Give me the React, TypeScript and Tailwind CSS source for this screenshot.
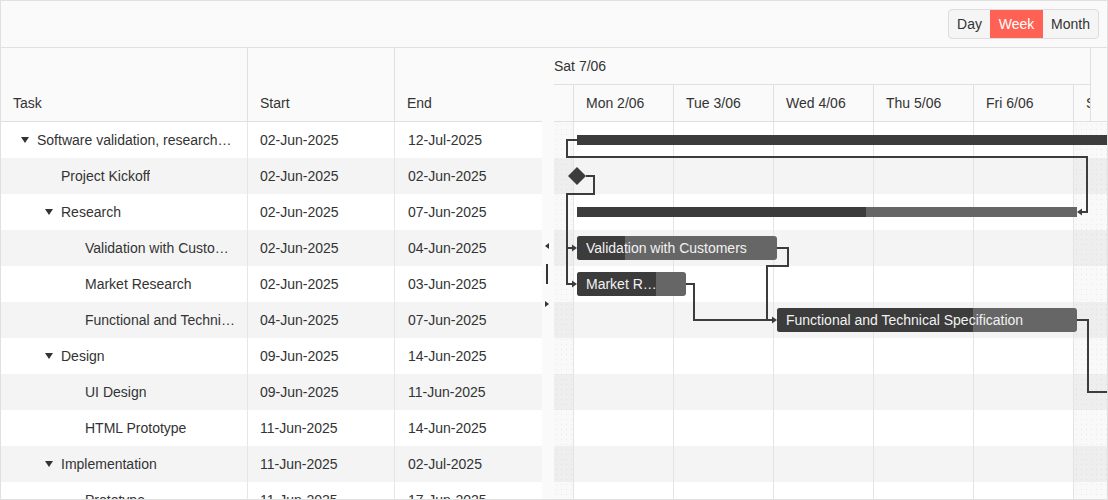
import React from "react";

type Row = { name: string; level: number; exp?: boolean; start: string; end: string };

const rows: Row[] = [
  { name: "Software validation, research and implementation", level: 0, exp: true, start: "02-Jun-2025", end: "12-Jul-2025" },
  { name: "Project Kickoff", level: 1, start: "02-Jun-2025", end: "02-Jun-2025" },
  { name: "Research", level: 1, exp: true, start: "02-Jun-2025", end: "07-Jun-2025" },
  { name: "Validation with Customers", level: 2, start: "02-Jun-2025", end: "04-Jun-2025" },
  { name: "Market Research", level: 2, start: "02-Jun-2025", end: "03-Jun-2025" },
  { name: "Functional and Technical Specification", level: 2, start: "04-Jun-2025", end: "07-Jun-2025" },
  { name: "Design", level: 1, exp: true, start: "09-Jun-2025", end: "14-Jun-2025" },
  { name: "UI Design", level: 2, start: "09-Jun-2025", end: "11-Jun-2025" },
  { name: "HTML Prototype", level: 2, start: "11-Jun-2025", end: "14-Jun-2025" },
  { name: "Implementation", level: 1, exp: true, start: "11-Jun-2025", end: "02-Jul-2025" },
  { name: "Prototype", level: 2, start: "11-Jun-2025", end: "17-Jun-2025" },
];

const indent = ["pl-[20px]", "pl-[44px]", "pl-[68px]"];
const indentNoExp = ["pl-[36px]", "pl-[60px]", "pl-[84px]"];

function Caret() {
  return (
    <svg width="8" height="6" viewBox="0 0 8 6" className="shrink-0 mr-[8px]">
      <polygon points="0,0 8,0 4,6" fill="#333" />
    </svg>
  );
}

const days = ["Mon 2/06", "Tue 3/06", "Wed 4/06", "Thu 5/06", "Fri 6/06", "Sat 7/06"];

const weekendBg =
  "bg-[rgba(0,0,0,0.025)] bg-[radial-gradient(rgba(0,0,0,0.06)_0.6px,transparent_0.8px)] bg-[length:5px_5px]";

function Bar({
  left,
  top,
  width,
  progress,
  label,
}: {
  left: number;
  top: number;
  width: number;
  progress: number;
  label: string;
}) {
  return (
    <div
      className="absolute h-[24px] rounded-[3px] bg-[#666666] overflow-hidden"
      style={{ left, top, width }}
    >
      <div className="absolute left-0 top-0 bottom-0 bg-[#3c3c3c]" style={{ width: progress }} />
      <div className="relative h-full flex items-center pl-[9px] pr-[25px] text-[14px] text-[#f2f2f2] whitespace-nowrap overflow-hidden">
        <span className="truncate">{label}</span>
      </div>
    </div>
  );
}

export default function App() {
  return (
    <div className="w-[1108px] h-[500px] border border-[#e0e0e0] flex flex-col overflow-hidden bg-white font-['Liberation_Sans',Arial,sans-serif] text-[14px] text-[#333]">
      {/* toolbar */}
      <div className="h-[47px] shrink-0 border-b border-[#e0e0e0] bg-[#fafafa] flex justify-end items-start pt-[8px] pr-[8px]">
        <div className="flex h-[30px] rounded-[4px] border border-[#dddddd] bg-[#f5f5f5] overflow-hidden">
          <div className="w-[41px] flex items-center justify-center text-[#333]">Day</div>
          <div className="w-[53px] flex items-center justify-center bg-[#ff6155] text-white">Week</div>
          <div className="w-[55px] flex items-center justify-center text-[#333]">Month</div>
        </div>
      </div>

      {/* body */}
      <div className="flex flex-1 min-h-0">
        {/* table */}
        <div className="w-[541px] shrink-0 flex flex-col">
          <div className="h-[74px] shrink-0 flex border-b border-[#e0e0e0] bg-[#fafafa]">
            <div className="w-[247px] border-r border-[#e0e0e0] flex items-end pb-[7px] pl-[12px]">Task</div>
            <div className="w-[147px] border-r border-[#e0e0e0] flex items-end pb-[7px] pl-[12px]">Start</div>
            <div className="flex-1 flex items-end pb-[7px] pl-[12px]">End</div>
          </div>
          <div className="flex-1 overflow-hidden">
            {rows.map((r, i) => (
              <div key={i} className={`flex h-[36px] ${i % 2 === 1 ? "bg-[#f4f4f4]" : "bg-white"}`}>
                <div
                  className={`w-[247px] border-r border-[#e6e6e6] flex items-center pr-[12px] min-w-0 ${
                    r.exp ? indent[r.level] : indentNoExp[r.level]
                  }`}
                >
                  {r.exp && <Caret />}
                  <span className="truncate">{r.name}</span>
                </div>
                <div className="w-[147px] border-r border-[#e6e6e6] flex items-center pl-[12px]">{r.start}</div>
                <div className="flex-1 flex items-center pl-[13px]">{r.end}</div>
              </div>
            ))}
          </div>
        </div>

        {/* splitter */}
        <div className="w-[12px] shrink-0 bg-[#fafafa] flex flex-col items-center pt-[74px]">
          <div className="flex flex-col items-center mt-[121px] ml-[-2px]">
            <svg width="4" height="6" viewBox="0 0 4 6">
              <polygon points="4,0 4,6 0,3" fill="#333" />
            </svg>
            <div className="w-[2px] h-[20px] bg-[#333] mt-[15px]" />
            <svg width="4" height="6" viewBox="0 0 4 6" className="mt-[17px]">
              <polygon points="0,0 0,6 4,3" fill="#333" />
            </svg>
          </div>
        </div>

        {/* timeline */}
        <div className="flex-1 min-w-0 flex flex-col">
          <div className="h-[74px] shrink-0 flex border-b border-[#e0e0e0] bg-[#fafafa]">
            <div className="flex-1 min-w-0 flex flex-col overflow-hidden">
              <div className="h-[37px] shrink-0 border-b border-[#e0e0e0] flex items-center whitespace-nowrap">
                Sat 7/06
              </div>
              <div className="flex-1 flex">
                <div className="w-[20px] shrink-0 border-r border-[#e0e0e0]" />
                {days.map((d) => (
                  <div
                    key={d}
                    className="w-[100px] shrink-0 border-r border-[#e0e0e0] flex items-center pl-[12px] whitespace-nowrap"
                  >
                    {d}
                  </div>
                ))}
              </div>
            </div>
            <div className="w-[17px] shrink-0 border-l border-[#e0e0e0]" />
          </div>

          <div className="flex-1 relative overflow-hidden">
            {rows.map((_, i) => (
              <div key={i} className={`h-[36px] ${i % 2 === 1 ? "bg-[#f4f4f4]" : "bg-white"}`} />
            ))}
            {/* grid columns */}
            <div className="absolute inset-0 flex">
              <div className={`w-[20px] shrink-0 border-r border-[#e4e4e4] ${weekendBg}`} />
              {[0, 1, 2, 3, 4].map((c) => (
                <div key={c} className="w-[100px] shrink-0 border-r border-[#e4e4e4]" />
              ))}
              <div className={`flex-1 ${weekendBg}`} />
            </div>

            {/* summary bars */}
            <div className="absolute left-[23px] right-[-10px] top-[13px] h-[10px] bg-[#3c3c3c]" />
            <div className="absolute left-[23px] w-[500px] top-[85px] h-[10px] bg-[#666666]">
              <div className="h-full w-[289px] bg-[#3c3c3c]" />
            </div>

            <Bar left={23} top={114} width={200} progress={48} label="Validation with Customers" />
            <Bar left={23} top={150} width={109} progress={79} label="Market Research" />
            <Bar left={223} top={186} width={300} progress={196} label="Functional and Technical Specification" />

            <svg className="absolute left-0 top-0" width="560" height="380" viewBox="0 0 560 380">
              <g fill="none" stroke="#3c3c3c" strokeWidth="2">
                <path d="M23 18 H13 V35 H533 V90 H527" />
                <path d="M32 54 H40 V72 H13 V162 H18" />
                <path d="M13 126 H18" />
                <path d="M223 126 H234 V144 H213 V198 H218" />
                <path d="M132 162 H140 V198 H213" />
                <path d="M523 198 H534 V270 H560" />
              </g>
              <g fill="#3c3c3c">
                <polygon points="523,90 528,86.5 528,93.5" />
                <polygon points="23,126 18,122.5 18,129.5" />
                <polygon points="23,162 18,158.5 18,165.5" />
                <polygon points="223,198 218,194.5 218,201.5" />
                <polygon points="23,45 32,54 23,63 14,54" />
              </g>
            </svg>
          </div>
        </div>
      </div>
    </div>
  );
}
